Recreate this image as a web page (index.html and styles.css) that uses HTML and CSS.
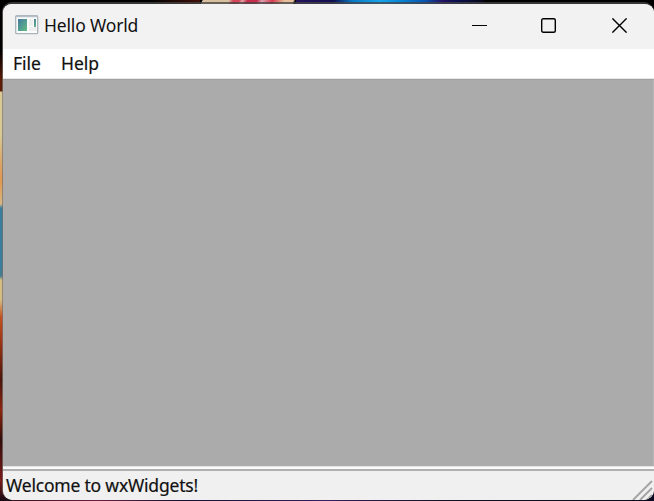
FILE: index.html
```html
<!DOCTYPE html>
<html lang="en">
<head>
<meta charset="utf-8">
<title>Hello World</title>
<link rel="stylesheet" href="styles.css">
</head>
<body>
<div class="desktop">
  <div class="window">
    <header class="titlebar">
      <svg class="app-icon" width="24" height="20" viewBox="0 0 24 20">
        <defs><linearGradient id="g" x1="0" y1="0" x2="1" y2="1"><stop offset="0" stop-color="#43799f"/><stop offset="1" stop-color="#62bd82"/></linearGradient></defs>
        <rect x=".7" y=".7" width="22" height="18" rx="1" fill="#fbfcfc" stroke="#aab4bc" stroke-width="1.3"/>
        <path d="M1 1.5H22.5" stroke="#b4bfca" stroke-width="1.4"/>
        <rect x="3" y="4" width="9" height="12" fill="url(#g)"/>
        <path d="M14 4h4v7h-4zM14 12h8v4h-8z" fill="#eeefec"/>
        <rect x="19" y="4" width="2" height="8" fill="url(#g)"/>
      </svg>
      <h1 class="title">Hello World</h1>
      <div class="controls">
        <svg width="15" height="15" viewBox="0 0 15 15"><path d="M0 7.5H15" stroke="#000"/></svg>
        <svg width="15" height="15" viewBox="0 0 15 15"><rect x=".7" y=".7" width="13.6" height="13.6" rx="1.5" fill="none" stroke="#000" stroke-width="1.4"/></svg>
        <svg width="15" height="15" viewBox="0 0 15 15"><path d="M.4.4l14.2 14.2M14.6.4L.4 14.6" stroke="#000" stroke-width="1.4"/></svg>
      </div>
    </header>
    <nav class="menubar"><span class="menu-file">File</span><span class="menu-help">Help</span></nav>
    <main class="client"></main>
    <footer class="statusbar">
      <span class="status-text">Welcome to wxWidgets!</span>
      <svg class="grip" width="22" height="20" viewBox="0 0 22 20"><path d="M1 20L20 1M8 20L20 8M15 20l5-5" stroke="#a5a5a5" stroke-width="2"/></svg>
    </footer>
  </div>
</div>
</body>
</html>
```
FILE: styles.css
```css
* { box-sizing: border-box; }
body { margin: 0; overflow: hidden; }
.desktop {
  width: 654px;
  height: 501px;
  padding: 2px 0 1px 2px;
  background:
    linear-gradient(115deg, transparent 4%, #d8bf9d 5% 30%, #d4475b 34% 40%, #e8a2a5 43%, #c72c4c 48% 57%, #dda0b0 62%, #d83a50 72%, #e5c09b 84% 92%, transparent 94%) 198px 0 / 102px 4px no-repeat,
    linear-gradient(90deg, #24105b, #101050 20%, #0879c6 30%, #16a4ec 45%, #0787d8 55%, #0756b3 68%, #251063 78%, #0a1050 85%, #050515) 296px 0 / 188px 4px no-repeat,
    linear-gradient(90deg, #000 75%, #401008) 0 0 / 200px 4px no-repeat,
    linear-gradient(#000 0 50px, #5b1d08 80px 91px, #d8c995 92px 135px, #d9a366 165px, #e19850 180px, #d6b783 204px, #397d9e 208px 265px, #477b90 276px, #d3bd82 280px 300px, #c45120 317px, #973113 345px, #4a160d 380px, #8d2510 410px, #310d0a 440px, #7a1c1b 480px, #170914) 0 0 / 12px 501px no-repeat,
    linear-gradient(90deg, #351019, #652040 15%, #151037 28%, #35205b 50%, #100f23 70%, #090920) 0 491px / 654px 10px no-repeat,
    #000;
}
.window {
  display: flex;
  flex-direction: column;
  width: 652px;
  height: 498px;
  overflow: hidden;
  border: solid rgba(70, 70, 70, .78);
  border-width: 2px 0 0 1px;
  border-left-color: rgba(120, 112, 106, .7);
  border-radius: 10px;
  background: #f0f0f0;
  background-clip: padding-box;
  font-family: "Noto Sans", sans-serif;
  color: #111;
}
.titlebar {
  display: flex;
  align-items: center;
  height: 45px;
  padding: 0 27px 0 12px;
  background: #f2f2f2;
}
.app-icon { flex: none; margin-top: -4px; }
.title {
  margin: -4px 0 0 5px;
  font-size: 17.5px;
  font-weight: 400;
  letter-spacing: -.17px;
  white-space: nowrap;
}
.controls {
  display: flex;
  gap: 54px;
  margin: -2px 0 0 auto;
}
.controls svg:last-child { margin-left: 2px; }
.menubar {
  display: flex;
  align-items: center;
  height: 30px;
  padding: 0 10px 2px;
  background: #fff;
  border-bottom: 1px solid #e8e8e8;
  font-size: 17.5px;
  -webkit-text-stroke: .2px #111;
}
.menu-file { width: 48px; }
.client {
  flex: 1;
  border-top: 1px solid #a0a0a0;
  border-right: 1px solid #b8b8b8;
  background: #ababab;
}
.statusbar {
  display: flex;
  justify-content: space-between;
  align-items: center;
  height: 34px;
  padding: 4px 0 0 3px;
  background: linear-gradient(#e3e3e3 0 1px, #fafafa 1px 3px, #b0b0b0 3px 5px, #f0f0f0 5px);
  font-size: 17.5px;
}
.status-text { white-space: nowrap; letter-spacing: -.2px; -webkit-text-stroke: .2px #111; }
.grip { align-self: flex-end; }
```
